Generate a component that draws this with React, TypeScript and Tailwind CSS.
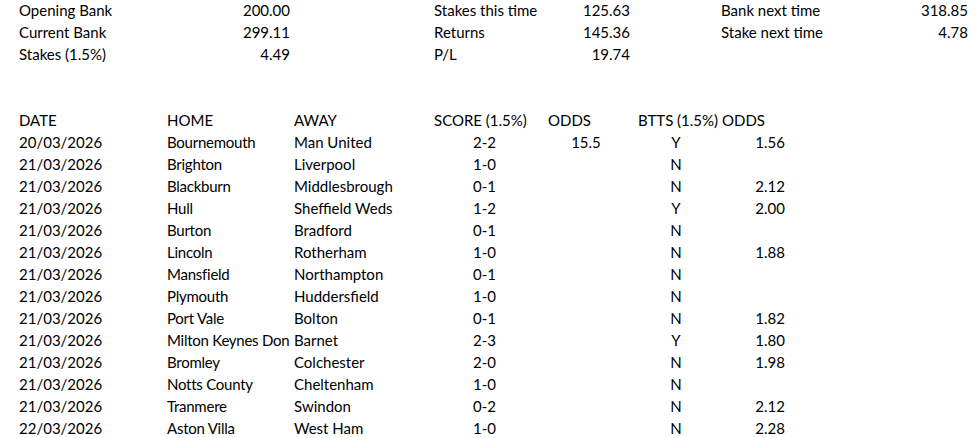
import React from "react";

const summary = [
  ["Opening Bank", "200.00", "Stakes this time", "125.63", "Bank next time", "318.85"],
  ["Current Bank", "299.11", "Returns", "145.36", "Stake next time", "4.78"],
  ["Stakes (1.5%)", "4.49", "P/L", "19.74", "", ""],
];

const fixtures = [
  ["20/03/2026", "Bournemouth", "Man United", "2-2", "15.5", "Y", "1.56"],
  ["21/03/2026", "Brighton", "Liverpool", "1-0", "", "N", ""],
  ["21/03/2026", "Blackburn", "Middlesbrough", "0-1", "", "N", "2.12"],
  ["21/03/2026", "Hull", "Sheffield Weds", "1-2", "", "Y", "2.00"],
  ["21/03/2026", "Burton", "Bradford", "0-1", "", "N", ""],
  ["21/03/2026", "Lincoln", "Rotherham", "1-0", "", "N", "1.88"],
  ["21/03/2026", "Mansfield", "Northampton", "0-1", "", "N", ""],
  ["21/03/2026", "Plymouth", "Huddersfield", "1-0", "", "N", ""],
  ["21/03/2026", "Port Vale", "Bolton", "0-1", "", "N", "1.82"],
  ["21/03/2026", "Milton Keynes Don", "Barnet", "2-3", "", "Y", "1.80"],
  ["21/03/2026", "Bromley", "Colchester", "2-0", "", "N", "1.98"],
  ["21/03/2026", "Notts County", "Cheltenham", "1-0", "", "N", ""],
  ["21/03/2026", "Tranmere", "Swindon", "0-2", "", "N", "2.12"],
  ["22/03/2026", "Aston Villa", "West Ham", "1-0", "", "N", "2.28"],
];

const cols = "grid grid-cols-[148px_127px_140px_107px_96px_84px_71px] h-[22px] items-center";

export default function App() {
  return (
    <div className="h-[438px] w-[976px] overflow-hidden bg-white pl-[16px] -mt-px text-[15px] leading-[22px] text-black font-['Lato',sans-serif]">
      {summary.map((r, i) => (
        <div key={i} className="grid grid-cols-[148px_127px_140px_107px_96px_84px_1fr] h-[22px] items-center">
          <div className="pl-[3px]">{r[0]}</div>
          <div className="text-right pr-px">{r[1]}</div>
          <div />
          <div className="pl-[3px] whitespace-nowrap">{r[2]}</div>
          <div className="text-right pr-[4px]">{r[3]}</div>
          <div />
          <div className="flex justify-between pl-[3px] pr-[8px]">
            <span>{r[4]}</span>
            <span>{r[5]}</span>
          </div>
        </div>
      ))}
      <div className="h-[44px]" />
      <div className={cols}>
        <div className="pl-[3px]">DATE</div>
        <div className="pl-[3px]">HOME</div>
        <div className="pl-[3px]">AWAY</div>
        <div className="pl-[3px] whitespace-nowrap">SCORE (1.5%)</div>
        <div className="pl-[10px]">ODDS</div>
        <div className="pl-[4px] whitespace-nowrap">BTTS (1.5%)</div>
        <div className="pl-[4px]">ODDS</div>
      </div>
      {fixtures.map((f, i) => (
        <div key={i} className={cols}>
          <div className="pl-[3px]">{f[0]}</div>
          <div className="pl-[3px] whitespace-nowrap tracking-[-0.25px]">{f[1]}</div>
          <div className="pl-[3px] whitespace-nowrap">{f[2]}</div>
          <div className="text-center">{f[3]}</div>
          <div className="text-center">{f[4]}</div>
          <div className="text-center">{f[5]}</div>
          <div className="text-right pr-[4px]">{f[6]}</div>
        </div>
      ))}
    </div>
  );
}
